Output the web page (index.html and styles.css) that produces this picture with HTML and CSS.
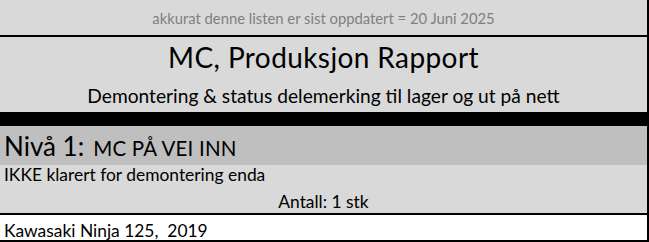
FILE: index.html
```html
<!DOCTYPE html>
<html lang="no">
<head>
<meta charset="utf-8">
<title>MC, Produksjon Rapport</title>
<link rel="stylesheet" href="styles.css">
</head>
<body>
<div class="sheet">
  <div class="row row-updated"><span class="center muted">akkurat denne listen er sist oppdatert = 20 Juni 2025</span></div>
  <div class="rule"></div>
  <div class="row row-title"><span class="center">MC, Produksjon Rapport</span></div>
  <div class="row row-sub"><span class="center">Demontering &amp; status delemerking til lager og ut på nett</span></div>
  <div class="band"></div>
  <div class="row row-level"><span class="left"><span class="lvl">Nivå 1:</span> <span class="lvl-name">MC PÅ VEI INN</span></span></div>
  <div class="row row-note"><span class="left">IKKE klarert for demontering enda</span></div>
  <div class="row row-count"><span class="center">Antall: 1 stk</span></div>
  <div class="rule"></div>
  <div class="row row-item"><span class="left">Kawasaki Ninja 125,&nbsp; 2019</span></div>
  <div class="rule"></div>
</div>
</body>
</html>
```
FILE: styles.css
```css
html, body {
  margin: 0;
  padding: 0;
  background: #ffffff;
}
.sheet {
  width: 649px;
  height: 242px;
  box-sizing: border-box;
  border-right: 2px solid #000;
  background: #d9d9d9;
  font-family: Lato, "Open Sans", sans-serif;
  color: #000;
  display: flex;
  flex-direction: column;
}
.row {
  display: flex;
  align-items: center;
  white-space: nowrap;
  box-sizing: border-box;
  flex: none;
}
.center {
  width: 100%;
  text-align: center;
}
.left {
  padding-left: 4px;
}
.muted { color: #7f7f7f; }
.rule { height: 2px; background: #000; flex: none; }
.band { height: 14px; background: #000; flex: none; }
.row-updated { height: 35px; font-size: 14.8px; }
.row-title { height: 39px; font-size: 28px; letter-spacing: 0.4px; }
.row-sub { height: 36px; font-size: 19.2px; padding-top: 2px; }
.row-level { height: 39px; background: #bfbfbf; padding-top: 1px; }
.lvl { font-size: 26px; }
.lvl-name { font-size: 20.5px; letter-spacing: 0.2px; margin-left: 5px; }
.row-note { height: 19px; font-size: 17.4px; }
.row-count { height: 29px; font-size: 17.4px; padding-top: 5px; }
.row-item { height: 25px; background: #fff; font-size: 17.4px; padding-top: 5px; }
```
